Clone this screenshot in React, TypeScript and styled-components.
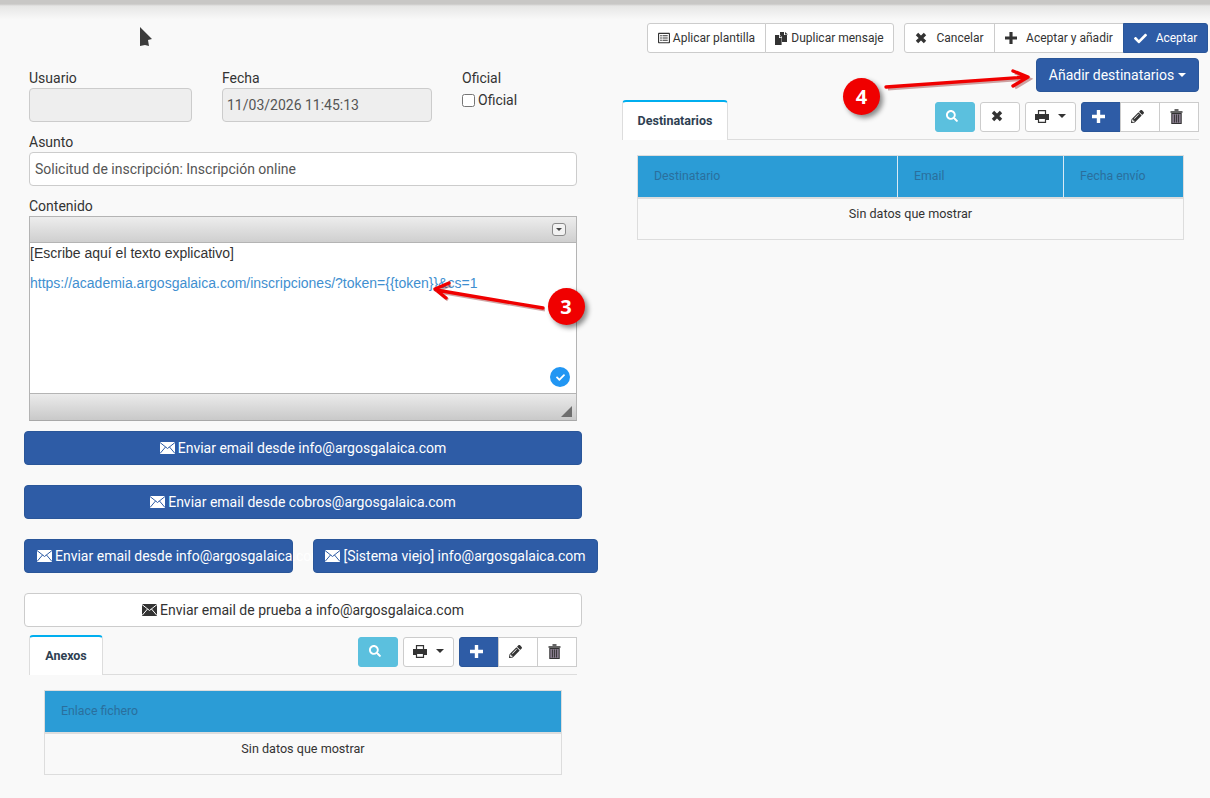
import React from "react";
import styled, { createGlobalStyle } from "styled-components";
import { FaCheck, FaSearch, FaPencilAlt, FaRegListAlt } from "react-icons/fa";

const Global = createGlobalStyle`
  html, body { margin: 0; padding: 0; background: #f9f9f9; }
  body { font-family: Roboto, "Liberation Sans", sans-serif; font-size: 14px; color: #333; }
  * { box-sizing: border-box; }
`;

const Page = styled.div`
  position: relative;
  width: 1210px;
  height: 798px;
  overflow: hidden;
  display: flex;
  align-items: flex-start;
  padding-left: 24px;
  gap: 24px;
  background: linear-gradient(#c8c7c5 0, #c8c7c5 4px, #e6e6e5 6px, #f9f9f9 20px);
`;

const LeftColumn = styled.div`
  width: 574px;
  flex: none;
  padding-top: 68px;
  display: flex;
  flex-direction: column;
`;

const FieldRow = styled.div`
  display: flex;
  gap: 30px;
  padding-left: 5px;
`;

const Field = styled.div<{ $w: number }>`
  width: ${(p) => p.$w}px;
  margin-bottom: 10px;
`;

const FullField = styled.div`
  width: 548px;
  margin-left: 5px;
  margin-bottom: 10px;
`;

const Label = styled.div`
  height: 20px;
  line-height: 20px;
  font-size: 14px;
  color: #333;
`;

const EditorLabel = styled(Label)`
  margin-left: 5px;
`;

const Input = styled.div<{ $disabled?: boolean }>`
  height: 34px;
  line-height: 32px;
  padding: 0 ${(p) => (p.$disabled ? 4 : 5)}px;
  font-size: 14px;
  color: #555;
  border: 1px solid #ccc;
  border-radius: 4px;
  background: ${(p) => (p.$disabled ? "#eee" : "#fff")};
`;

const CheckLine = styled.label`
  display: flex;
  align-items: center;
  height: 20px;
  margin-top: 2px;
  font-size: 14px;
  gap: 3px;
`;

const CheckBox = styled.span`
  width: 13px;
  height: 13px;
  border: 1px solid #767676;
  border-radius: 2.5px;
  background: #fff;
`;

const Editor = styled.div`
  width: 548px;
  height: 205px;
  margin-left: 5px;
  margin-bottom: 10px;
  border: 1px solid #b4b4b4;
  border-bottom-color: #a8a8a8;
  display: flex;
  flex-direction: column;
  background: #fff;
`;

const EditorBar = styled.div`
  height: 26px;
  flex: none;
  display: flex;
  align-items: center;
  justify-content: flex-end;
  padding-right: 10px;
  border-bottom: 1px solid #b4b4b4;
  background: linear-gradient(#ededed, #cfcfcf);
`;

const EditorToggle = styled.span`
  width: 14px;
  height: 13px;
  border: 1px solid #8a8a8a;
  border-radius: 3px;
  background: #f2f2f2;
  display: flex;
  align-items: center;
  justify-content: center;
  &::after {
    content: "";
    border: 3px solid transparent;
    border-top: 3px solid #444;
    border-bottom: 0;
  }
`;

const EditorBody = styled.div`
  flex: 1;
  position: relative;
  font-family: "Liberation Sans", Arial, sans-serif;
  font-size: 14px;
  line-height: 20px;
  color: #333;
`;

const EditorLine = styled.div`
  height: 20px;
  margin-bottom: 10px;
`;

const EditorLink = styled.span`
  color: #3f8fd0;
`;

const CheckBadge = styled.span`
  position: absolute;
  right: 6px;
  bottom: 6px;
  width: 20px;
  height: 20px;
  border-radius: 50%;
  background: #2196f3;
  color: #fff;
  display: flex;
  align-items: center;
  justify-content: center;
`;

const EditorFoot = styled.div`
  height: 27px;
  flex: none;
  position: relative;
  border-top: 1px solid #b4b4b4;
  background: linear-gradient(#ebebeb, #c9c9c9);
  &::after {
    content: "";
    position: absolute;
    right: 4px;
    bottom: 3px;
    border-left: 11px solid transparent;
    border-bottom: 11px solid #6e6e6e;
  }
`;

const SendButton = styled.div<{ $light?: boolean; $w?: number; $left?: boolean }>`
  width: ${(p) => p.$w ?? 558}px;
  height: 34px;
  flex: none;
  border-radius: 4px;
  border: 1px solid ${(p) => (p.$light ? "#ccc" : "#2a5699")};
  background: ${(p) => (p.$light ? "#fff" : "#2e5ca6")};
  color: ${(p) => (p.$light ? "#333" : "#fff")};
  font-size: 14px;
  line-height: 32px;
  white-space: nowrap;
  display: flex;
  align-items: center;
  justify-content: ${(p) => (p.$left ? "flex-start" : "center")};
  padding: ${(p) => (p.$left ? "0 0 0 12px" : "0")};
  gap: 3px;
  svg {
    flex: none;
  }
`;

const SendStack = styled.div`
  display: flex;
  flex-direction: column;
  gap: 20px;
  margin-bottom: 8px;
`;

const SendPair = styled.div`
  display: flex;
  gap: 20px;
`;

const TabRow = styled.div<{ $w: number; $ml: number }>`
  width: ${(p) => p.$w}px;
  margin-left: ${(p) => p.$ml}px;
  height: 40px;
  display: flex;
  justify-content: space-between;
  align-items: flex-start;
  border-bottom: 1px solid #ddd;
`;

const Tab = styled.div<{ $w: number }>`
  width: ${(p) => p.$w}px;
  height: 40px;
  background: #fff;
  border: 1px solid #ddd;
  border-top: 2px solid #00aeef;
  border-bottom: 0;
  border-radius: 4px 4px 0 0;
  text-align: center;
  line-height: 38px;
  font-size: 12.5px;
  font-weight: 700;
  color: #2e3f52;
`;

const Tools = styled.div`
  display: flex;
  gap: 5px;
  padding-top: 2px;
`;

const ToolBtn = styled.div<{ $w: number; $tone?: "info" | "primary"; $menu?: boolean }>`
  width: ${(p) => p.$w}px;
  height: 30px;
  border-radius: 3px;
  display: flex;
  align-items: center;
  justify-content: center;
  gap: 9px;
  padding-bottom: 2px;
  padding-right: ${(p) => (p.$menu ? 1 : 6)}px;
  font-size: 13px;
  border: 1px solid ${(p) => (p.$tone === "info" ? "#5bc0de" : p.$tone === "primary" ? "#2a5699" : "#ccc")};
  background: ${(p) => (p.$tone === "info" ? "#5bc0de" : p.$tone === "primary" ? "#2e5ca6" : "#fff")};
  color: ${(p) => (p.$tone ? "#fff" : "#333")};
`;

const ToolGroup = styled.div`
  display: flex;
  ${ToolBtn} {
    border-radius: 0;
    margin-left: -1px;
  }
  ${ToolBtn}:first-child {
    border-radius: 3px 0 0 3px;
    margin-left: 0;
  }
`;

const Caret = styled.span`
  width: 0;
  height: 0;
  border: 4px solid transparent;
  border-top: 4px solid #333;
  border-bottom: 0;
`;

const DataTable = styled.div<{ $w: number; $ml: number }>`
  width: ${(p) => p.$w}px;
  margin-left: ${(p) => p.$ml}px;
  margin-top: 15px;
  height: 85px;
  border: 1px solid #ddd;
  display: flex;
  flex-direction: column;
`;

const HeadRow = styled.div`
  height: 41px;
  flex: none;
  display: flex;
  background: #2b9cd6;
`;

const HeadCell = styled.div<{ $w?: number }>`
  ${(p) => (p.$w ? `width: ${p.$w}px; flex: none;` : "flex: 1;")}
  padding-left: 16px;
  font-size: 12.3px;
  line-height: 41px;
  color: #2a6f9d;
  & + & {
    border-left: 1px solid #d9eaf5;
  }
`;

const EmptyRow = styled.div`
  flex: 1;
  border-top: 2px solid #ddd;
  text-align: center;
  font-size: 12.6px;
  line-height: 30px;
  color: #333;
`;

const RightColumn = styled.div`
  width: 586px;
  flex: none;
  padding-top: 23px;
  display: flex;
  flex-direction: column;
`;

const TopBar = styled.div`
  display: flex;
  justify-content: flex-end;
  gap: 10px;
`;

const BarGroup = styled.div`
  display: flex;
`;

const BarBtn = styled.div<{ $w: number; $primary?: boolean; $gap?: number }>`
  width: ${(p) => p.$w}px;
  height: 30px;
  margin-left: -1px;
  display: flex;
  align-items: center;
  justify-content: center;
  gap: ${(p) => p.$gap ?? 3}px;
  font-size: 12px;
  white-space: nowrap;
  color: ${(p) => (p.$primary ? "#fff" : "#333")};
  background: ${(p) => (p.$primary ? "#2e5ca6" : "#fff")};
  border: 1px solid ${(p) => (p.$primary ? "#2a5699" : "#ccc")};
  &:first-child {
    margin-left: 0;
    border-radius: 3px 0 0 3px;
  }
  &:last-child {
    border-radius: 0 3px 3px 0;
  }
`;

const AddRow = styled.div`
  display: flex;
  justify-content: flex-end;
  padding-right: 9px;
  margin-top: 5px;
  margin-bottom: 8px;
`;

const AddBtn = styled.div`
  width: 163px;
  height: 34px;
  border-radius: 4px;
  background: #2e5ca6;
  border: 1px solid #2a5699;
  color: #fff;
  font-size: 14px;
  display: flex;
  align-items: center;
  justify-content: center;
  gap: 4px;
`;

const WhiteCaret = styled(Caret)`
  border-top-color: #fff;
`;

const Overlay = styled.svg`
  position: absolute;
  left: 0;
  top: 0;
  pointer-events: none;
`;

const Marker = styled.div<{ $x: number; $y: number }>`
  position: absolute;
  left: ${(p) => p.$x}px;
  top: ${(p) => p.$y}px;
  width: 37px;
  height: 37px;
  border-radius: 50%;
  background: #f00000;
  box-shadow: 3px 3px 5px rgba(0, 0, 0, 0.45);
  color: #fff;
  font-family: "Open Sans", Roboto, sans-serif;
  font-weight: 700;
  font-size: 20px;
  display: flex;
  align-items: center;
  justify-content: center;
`;

const Mail = ({ c = "#fff", bg = "#2e5ca6" }: { c?: string; bg?: string }) => (
  <svg width="15" height="12" viewBox="0 0 15 12" aria-hidden="true">
    <rect x="0" y="0" width="15" height="12" fill={c} />
    <path d="M0 .5l7.5 6 7.5-6M0 11.5l5.6-6.6M15 11.5l-5.6-6.6" fill="none" stroke={bg} strokeWidth="1" />
  </svg>
);

const Cross = ({ s = 12 }: { s?: number }) => (
  <svg width={s} height={s} viewBox="0 0 12 12" aria-hidden="true">
    <path d="M2 2l8 8M10 2l-8 8" stroke="currentColor" strokeWidth="3.4" fill="none" />
  </svg>
);

const Plus = ({ s = 13 }: { s?: number }) => (
  <svg width={s} height={s} viewBox="0 0 13 13" aria-hidden="true">
    <path d="M6.5 0v13M0 6.5h13" stroke="currentColor" strokeWidth="3.4" fill="none" />
  </svg>
);

const Printer = () => (
  <svg width="14" height="13" viewBox="0 0 14 13" aria-hidden="true">
    <path d="M3.5 4V.7h7V4" fill="#fff" stroke="#333" strokeWidth="1.2" />
    <path d="M0 4h14v6h-3V8H3v2H0z" fill="#333" />
    <path d="M3.5 8.5h7v3.9h-7z" fill="#fff" stroke="#333" strokeWidth="1.2" />
  </svg>
);

const Duplicate = () => (
  <svg width="13" height="13" viewBox="0 0 13 13" aria-hidden="true">
    <path d="M5 0h4v3h3v7H7V5L5 3z" fill="#333" />
    <path d="M10 0l3 2.5h-3z" fill="#333" />
    <path d="M0 3h4v3h2.6v7H0z" fill="#333" />
    <path d="M4.8 3l2 2.2h-2z" fill="#333" />
  </svg>
);

const Trash = () => (
  <svg width="13" height="15" viewBox="0 0 13 15" aria-hidden="true">
    <path d="M4.5 1h4M.5 3h12" stroke="#333" strokeWidth="1.6" fill="none" />
    <rect x="1.8" y="4.5" width="9.4" height="10" fill="#85798a" stroke="#333" strokeWidth="1" />
    <path d="M4.5 5.5v8M6.5 5.5v8M8.5 5.5v8" stroke="#333" strokeWidth="0.9" />
  </svg>
);

const Pointer = () => (
  <Overlay width="1210" height="798" aria-hidden="true">
    <path d="M140 27l12 12-4 1 1 6-4-1-5 1z" fill="#3c3c3c" />
    <g stroke="#7a0000" strokeOpacity="0.35" strokeWidth="3" fill="none" transform="translate(2 2)">
      <path d="M543 308L436 290M449 283l-14 6 11 9" />
      <path d="M886 87L1027 77M1013 71l15 6-15 9" />
    </g>
    <g stroke="#f00000" strokeWidth="3.4" fill="none" strokeLinecap="round" strokeLinejoin="round">
      <path d="M543 308L436 290M449 283l-14 6 11 9" />
      <path d="M886 87L1027 77M1013 71l15 6-15 9" />
    </g>
  </Overlay>
);

const TableTools = ({ withClear }: { withClear?: boolean }) => (
  <Tools>
    <ToolBtn $w={40} $tone="info">
      <FaSearch size={12} />
    </ToolBtn>
    {withClear && (
      <ToolBtn $w={40}>
        <Cross />
      </ToolBtn>
    )}
    <ToolBtn $w={51} $menu>
      <Printer />
      <Caret />
    </ToolBtn>
    <ToolGroup>
      <ToolBtn $w={40} $tone="primary">
        <Plus />
      </ToolBtn>
      <ToolBtn $w={40}>
        <FaPencilAlt size={13} />
      </ToolBtn>
      <ToolBtn $w={40}>
        <Trash />
      </ToolBtn>
    </ToolGroup>
  </Tools>
);

export default function App() {
  return (
    <Page>
      <Global />
      <LeftColumn>
        <FieldRow>
          <Field $w={163}>
            <Label>Usuario</Label>
            <Input $disabled />
          </Field>
          <Field $w={210}>
            <Label>Fecha</Label>
            <Input $disabled>11/03/2026 11:45:13</Input>
          </Field>
          <Field $w={90}>
            <Label>Oficial</Label>
            <CheckLine>
              <CheckBox />
              Oficial
            </CheckLine>
          </Field>
        </FieldRow>
        <FullField>
          <Label>Asunto</Label>
          <Input>Solicitud de inscripción: Inscripción online</Input>
        </FullField>
        <EditorLabel>Contenido</EditorLabel>
        <Editor>
          <EditorBar>
            <EditorToggle />
          </EditorBar>
          <EditorBody>
            <EditorLine>[Escribe aquí el texto explicativo]</EditorLine>
            <EditorLine>
              <EditorLink>https://academia.argosgalaica.com/inscripciones/?token={"{{token}}"}&amp;cs=1</EditorLink>
            </EditorLine>
            <CheckBadge>
              <FaCheck size={9} />
            </CheckBadge>
          </EditorBody>
          <EditorFoot />
        </Editor>
        <SendStack>
          <SendButton>
            <Mail />
            Enviar email desde info@argosgalaica.com
          </SendButton>
          <SendButton>
            <Mail />
            Enviar email desde cobros@argosgalaica.com
          </SendButton>
          <SendPair>
            <SendButton $w={269} $left>
              <Mail />
              Enviar email desde info@argosgalaica.com
            </SendButton>
            <SendButton $w={285}>
              <Mail />
              [Sistema viejo] info@argosgalaica.com
            </SendButton>
          </SendPair>
          <SendButton $light>
            <Mail c="#333" bg="#fff" />
            Enviar email de prueba a info@argosgalaica.com
          </SendButton>
        </SendStack>
        <TabRow $w={548} $ml={5}>
          <Tab $w={74}>Anexos</Tab>
          <TableTools />
        </TabRow>
        <DataTable $w={518} $ml={20}>
          <HeadRow>
            <HeadCell>Enlace fichero</HeadCell>
          </HeadRow>
          <EmptyRow>Sin datos que mostrar</EmptyRow>
        </DataTable>
      </LeftColumn>
      <RightColumn>
        <TopBar>
          <BarGroup>
            <BarBtn $w={119}>
              <FaRegListAlt size={12} />
              Aplicar plantilla
            </BarBtn>
            <BarBtn $w={129}>
              <Duplicate />
              Duplicar mensaje
            </BarBtn>
          </BarGroup>
          <BarGroup>
            <BarBtn $w={91} $gap={9}>
              <Cross />
              Cancelar
            </BarBtn>
            <BarBtn $w={130} $gap={9}>
              <Plus s={12} />
              Aceptar y añadir
            </BarBtn>
            <BarBtn $w={85} $primary $gap={9}>
              <FaCheck size={13} />
              Aceptar
            </BarBtn>
          </BarGroup>
        </TopBar>
        <AddRow>
          <AddBtn>
            Añadir destinatarios
            <WhiteCaret />
          </AddBtn>
        </AddRow>
        <TabRow $w={577} $ml={0}>
          <Tab $w={106}>Destinatarios</Tab>
          <TableTools withClear />
        </TabRow>
        <DataTable $w={547} $ml={15}>
          <HeadRow>
            <HeadCell $w={259}>Destinatario</HeadCell>
            <HeadCell $w={166}>Email</HeadCell>
            <HeadCell>Fecha envío</HeadCell>
          </HeadRow>
          <EmptyRow>Sin datos que mostrar</EmptyRow>
        </DataTable>
      </RightColumn>
      <Pointer />
      <Marker $x={547.5} $y={288}>3</Marker>
      <Marker $x={843} $y={78}>4</Marker>
    </Page>
  );
}
